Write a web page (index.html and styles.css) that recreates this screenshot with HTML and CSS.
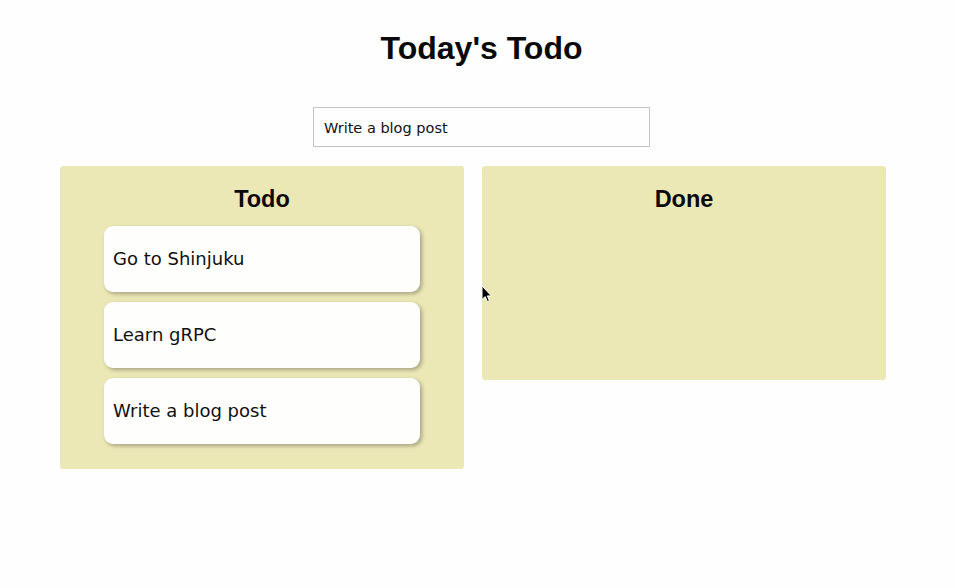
FILE: index.html
```html
<!DOCTYPE html>
<html lang="en">
<head>
<meta charset="utf-8">
<title>Today's Todo</title>
<link rel="stylesheet" href="styles.css">
</head>
<body>
<div class="app">
  <header class="header">
    <h1 class="title">Today's Todo</h1>
    <input class="new-todo" type="text" value="Write a blog post">
  </header>
  <main class="board">
    <section class="panel panel-todo">
      <h2 class="panel-title">Todo</h2>
      <ul class="cards">
        <li class="card">Go to Shinjuku</li>
        <li class="card">Learn gRPC</li>
        <li class="card">Write a blog post</li>
      </ul>
    </section>
    <section class="panel panel-done">
      <h2 class="panel-title">Done</h2>
    </section>
  </main>
  <svg class="cursor" width="12" height="18" viewBox="0 0 12 18" aria-hidden="true">
    <path d="M1 1 L1 14.5 L4.2 11.6 L6.4 16.6 L8.4 15.7 L6.3 10.9 L10.4 10.9 Z" fill="#000" stroke="#fff" stroke-width="1" stroke-linejoin="round"/>
  </svg>
</div>
</body>
</html>
```

FILE: styles.css
```css
html, body {
  margin: 0;
  padding: 0;
  background: #fefefe;
}

body {
  font-family: "DejaVu Sans", sans-serif;
  color: #111;
}

.app {
  position: relative;
  width: 956px;
  height: 588px;
}

.header {
  display: flex;
  flex-direction: column;
  align-items: center;
  padding-left: 7px;
}

.title {
  margin: 30px 0 0;
  font-family: "Liberation Sans", Arial, sans-serif;
  font-weight: bold;
  font-size: 32px;
  line-height: 36px;
  color: #0a0a0a;
}

.new-todo {
  box-sizing: border-box;
  margin-top: 41px;
  width: 337px;
  height: 40px;
  padding: 1px 10px 0;
  border: 1px solid #c4c4c8;
  border-radius: 0;
  background: #fefefe;
  font-family: "DejaVu Sans", sans-serif;
  font-size: 14.5px;
  color: #111;
  outline: none;
}

.board {
  display: flex;
  align-items: flex-start;
  gap: 18px;
  margin-top: 19px;
  padding-left: 60px;
}

.panel {
  box-sizing: border-box;
  width: 404px;
  background: #ece8b6;
  border-radius: 3px;
  padding: 19px 0 25px;
}

.panel-done {
  height: 214px;
}

.panel-title {
  margin: 0;
  text-align: center;
  font-family: "Liberation Sans", Arial, sans-serif;
  font-weight: bold;
  font-size: 23.5px;
  line-height: 28px;
  color: #0a0a0a;
}

.cards {
  list-style: none;
  margin: 13px auto 0;
  padding: 0;
  width: 316px;
  display: flex;
  flex-direction: column;
  gap: 10px;
}

.card {
  box-sizing: border-box;
  height: 66px;
  display: flex;
  align-items: center;
  padding: 0 8px 1px 9px;
  background: #fefefc;
  border-radius: 9px;
  box-shadow: 2px 2px 4px rgba(0, 0, 0, 0.3);
  font-size: 18px;
  color: #111;
}

.cursor {
  position: absolute;
  left: 481px;
  top: 285px;
}
```
